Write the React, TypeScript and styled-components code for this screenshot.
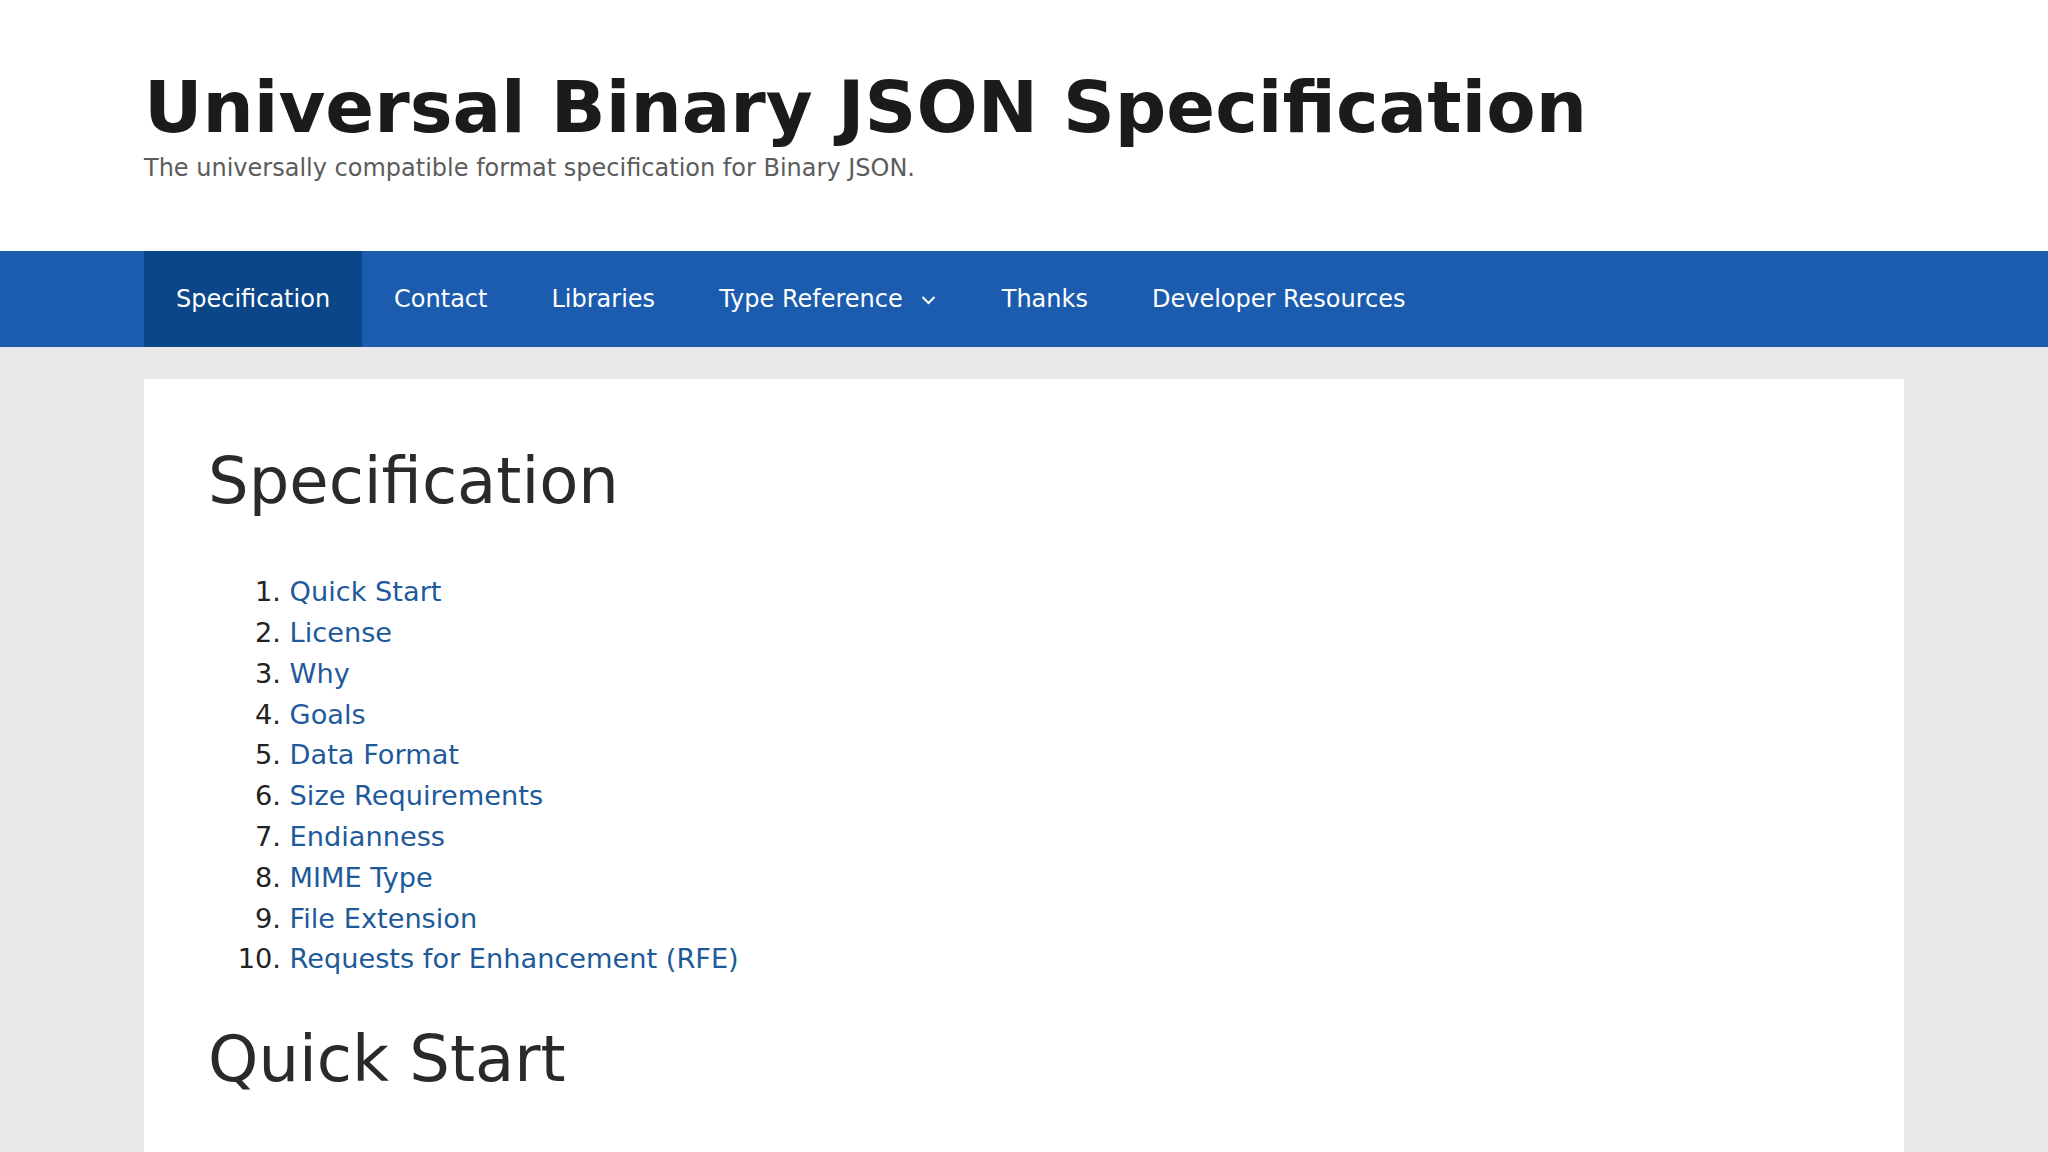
import styled, { createGlobalStyle } from "styled-components";

const GlobalStyle = createGlobalStyle`
	* {
		box-sizing: border-box;
	}
	html,
	body {
		margin: 0;
		padding: 0;
	}
	body {
		background-color: #e9e9e9;
		font-family: "DejaVu Sans", "Liberation Sans", sans-serif;
		color: #222222;
		font-size: 27.2px;
		line-height: 1.5;
	}
`;

const SiteHeader = styled.header`
	background-color: #ffffff;
`;

const InsideHeader = styled.div`
	width: 1760px;
	margin: 0 auto;
	padding: 64px 0 65px;
`;

const SiteTitle = styled.p`
	margin: 0;
	font-size: 72px;
	font-weight: 700;
	line-height: 1.2;
	color: #1b1b1b;
`;

const Tagline = styled.p`
	margin: 0;
	font-size: 24px;
	line-height: 1.5;
	color: #5c5c5c;
`;

const NavBar = styled.nav`
	background-color: #1b5cae;
`;

const NavList = styled.ul`
	width: 1760px;
	margin: 0 auto;
	padding: 0;
	list-style: none;
	display: flex;
`;

const NavItem = styled.li<{ $active?: boolean }>`
	display: flex;
	align-items: center;
	gap: 18px;
	padding: 0 32px;
	height: 96px;
	font-size: 24px;
	color: #ffffff;
	background-color: ${(p) => (p.$active ? "#0b4689" : "transparent")};
	cursor: pointer;
`;

const Chevron = styled.svg`
	width: 17px;
	height: 16px;
	margin-top: 2px;
`;

const Main = styled.main`
	width: 1760px;
	margin: 32px auto 0;
`;

const Article = styled.article`
	background-color: #ffffff;
	padding: 64px;
	min-height: 900px;
`;

const Heading = styled.h1<{ $gap?: number }>`
	margin: 0 0 ${(p) => p.$gap ?? 32}px;
	font-size: 64px;
	font-weight: 400;
	line-height: 1.2;
	color: #2a2a2a;
`;

const Toc = styled.ol`
	margin: 0 0 40.8px 81.6px;
	padding: 0;
	color: #222222;

	a {
		color: #1e5a9a;
		text-decoration: none;
	}
`;

const navLinks = ["Specification", "Contact", "Libraries", "Type Reference", "Thanks", "Developer Resources"];

const sections = [
	"Quick Start",
	"License",
	"Why",
	"Goals",
	"Data Format",
	"Size Requirements",
	"Endianness",
	"MIME Type",
	"File Extension",
	"Requests for Enhancement (RFE)",
];

const App = () => {
	return (
		<>
			<GlobalStyle />
			<SiteHeader>
				<InsideHeader>
					<SiteTitle>Universal Binary JSON Specification</SiteTitle>
					<Tagline>The universally compatible format specification for Binary JSON.</Tagline>
				</InsideHeader>
			</SiteHeader>
			<NavBar>
				<NavList>
					{navLinks.map((link) => (
						<NavItem key={link} $active={link === "Specification"}>
							{link}
							{link === "Type Reference" && (
								<Chevron viewBox="0 0 17 16" fill="none">
									<polyline points="1.5,5 7.5,11 13.5,5" stroke="#ffffff" strokeWidth="2" />
								</Chevron>
							)}
						</NavItem>
					))}
				</NavList>
			</NavBar>
			<Main>
				<Article>
					<Heading $gap={52}>Specification</Heading>
					<Toc>
						{sections.map((s) => (
							<li key={s}>
								<a href="#">{s}</a>
							</li>
						))}
					</Toc>
					<Heading as="h2">Quick Start</Heading>
				</Article>
			</Main>
		</>
	);
};

export default App;
